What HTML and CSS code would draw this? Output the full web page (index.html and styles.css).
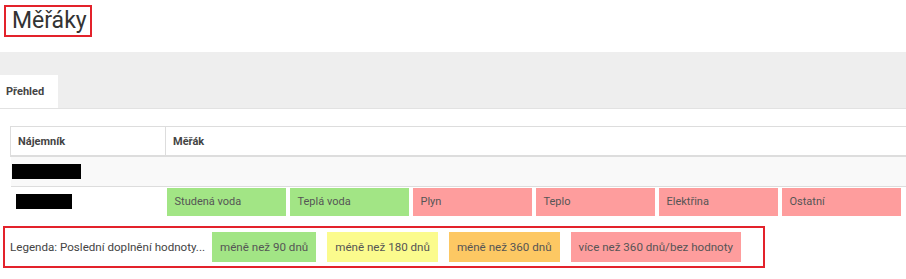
FILE: index.html
```html
<!DOCTYPE html>
<html lang="cs">
<head>
  <meta charset="UTF-8">
  <title>Měřáky</title>
  <link rel="stylesheet" href="styles.css">
</head>
<body>
  <h1 class="title">Měřáky</h1>
  <div class="tabs">
    <div class="tab active">Přehled</div>
  </div>
  <table class="meters">
    <thead>
      <tr><th class="col-tenant">Nájemník</th><th>Měřák</th></tr>
    </thead>
    <tbody>
      <tr class="group"><td colspan="2"><span class="redacted wide"></span></td></tr>
      <tr>
        <td class="col-tenant"><span class="redacted"></span></td>
        <td class="meter-cell">
          <div class="meter-list">
            <span class="meter ok">Studená voda</span>
            <span class="meter ok">Teplá voda</span>
            <span class="meter bad">Plyn</span>
            <span class="meter bad">Teplo</span>
            <span class="meter bad">Elektřina</span>
            <span class="meter bad">Ostatní</span>
          </div>
        </td>
      </tr>
    </tbody>
  </table>
  <div class="legend">
    <span class="legend-label">Legenda: Poslední doplnění hodnoty...</span>
    <span class="chip ok">méně než 90 dnů</span>
    <span class="chip warn">méně než 180 dnů</span>
    <span class="chip late">méně než 360 dnů</span>
    <span class="chip bad">více než 360 dnů/bez hodnoty</span>
  </div>
</body>
</html>
```

FILE: styles.css
```css
body { margin: 0; font-family: Roboto, "Liberation Sans", sans-serif; color: #333; background: #fff; overflow: hidden; width: 906px; }

.title { display: inline-block; margin: 5px 0 0 4px; padding: 1px 3px 1px 6px; font-size: 23px; font-weight: 400; line-height: 26px; border: 2px solid #e3222b; color: #333; }

.tabs { margin-top: 15px; height: 56px; background: #eee; border-bottom: 1px solid #e2e2e2; display: flex; align-items: flex-end; }
.tab { background: #fff; width: 52px; height: 33px; padding-left: 6px; font-size: 11px; font-weight: 700; line-height: 33px; color: #444; }

.meters { margin: 17px 0 0 10px; width: 900px; border-collapse: collapse; font-size: 11px; }
.meters th { text-align: left; font-weight: 700; color: #444; padding: 0 7px; height: 28px; border: 1px solid #ddd; border-bottom: 2px solid #ddd; }
.meters th.col-tenant { width: 140px; }
.meters td { border-top: 1px solid #ddd; padding: 0; height: 29px; }
.group td { background: #f9f9f9; padding: 0 1px; }
.redacted { display: inline-block; width: 56px; height: 15px; background: #000; vertical-align: middle; }
.redacted.wide { width: 69px; }
.col-tenant .redacted { margin-left: 5px; }
.meter-cell { padding: 1px 0 0 0; }
.meter-list { display: flex; gap: 4px; padding-left: 1px; }
.meter { width: 111px; height: 28px; line-height: 28px; padding-left: 8px; color: #555; }
.ok { background: #a2e585; }
.bad { background: #fe9d9d; }
.warn { background: #fbfb8d; }
.late { background: #fdc863; }

.legend { display: flex; align-items: center; gap: 11px; margin: 10px 0 0 3px; width: 753px; height: 38px; padding-left: 5px; border: 2px solid #e3222b; font-size: 11.6px; color: #444; }
.legend-label { margin-right: -4px; }
.chip { padding: 0 8px; height: 30px; line-height: 30px; color: #555; }
```
